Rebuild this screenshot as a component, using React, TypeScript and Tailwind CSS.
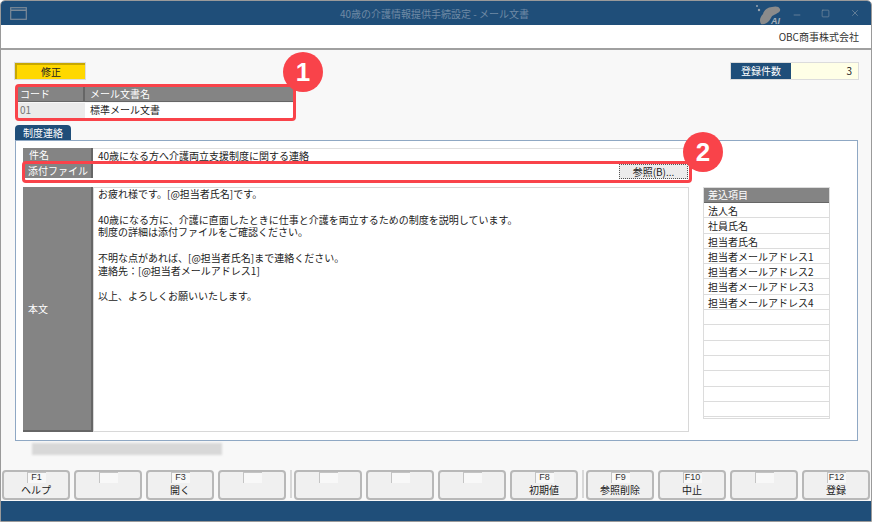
import React from 'react';
import { Minus, Square, X } from 'lucide-react';

const font = { fontFamily: '"Noto Sans CJK JP", "Liberation Sans", sans-serif' };

const fieldItems = [
  '法人名',
  '社員氏名',
  '担当者氏名',
  '担当者メールアドレス1',
  '担当者メールアドレス2',
  '担当者メールアドレス3',
  '担当者メールアドレス4',
  '',
  '',
  '',
  '',
  '',
  '',
  '',
];

const bodyLines = [
  'お疲れ様です。[@担当者氏名]です。',
  '',
  '40歳になる方に、介護に直面したときに仕事と介護を両立するための制度を説明しています。',
  '制度の詳細は添付ファイルをご確認ください。',
  '',
  '不明な点があれば、[@担当者氏名]まで連絡ください。',
  '連絡先：[@担当者メールアドレス1]',
  '',
  '以上、よろしくお願いいたします。',
];

const FnKey = ({ k, label }: { k?: string; label?: string }) => (
  <div className="w-[68px] h-[30px] shrink-0 rounded-[4px] border-2 border-[#b8b8b8] bg-[#f0f0f0] flex flex-col items-center">
    <div className="h-[11px] min-w-[19px] px-[1px] border-t border-l border-[#c4c4c4] bg-[#f8f8f8] font-['Liberation_Sans'] text-[9px] leading-[9px] text-[#333] text-center">
      {k}
    </div>
    <div className="text-[10px] leading-[14px] text-[#222] whitespace-nowrap">{label}</div>
  </div>
);

const Badge = ({ n, className }: { n: string; className: string }) => (
  <div className={`absolute w-[40px] h-[40px] rounded-full bg-[#f9434a] text-white text-[26px] font-bold leading-[40px] text-center ${className}`} style={{ fontFamily: '"Liberation Sans", sans-serif' }}>
    {n}
  </div>
);

export default function App() {
  return (
    <div className="relative w-[872px] h-[522px] overflow-hidden bg-[#f8f8f8] text-[10px] text-[#222] flex flex-col border border-[#9a9a9a] rounded-t-[5px]" style={font}>
      {/* title bar */}
      <div className="h-[24px] shrink-0 bg-[#1f4e79] flex items-center pl-[9px] pr-[9px]">
        <svg width="17" height="13" viewBox="0 0 17 13" fill="none" stroke="#7c8a98" strokeWidth="1.2">
          <rect x="0.7" y="0.7" width="15.6" height="11.6" />
          <path d="M1 3.2h15" strokeWidth="1.6" />
        </svg>
        <div className="flex-1 text-center text-[10px] text-[#6f8aa5] pl-[88px]">40歳の介護情報提供手続設定 - メール文書</div>
        <svg width="28" height="24" viewBox="0 0 28 24" className="mr-[10px]">
          <path d="M7 23C5 20 6 16 9 13 10 9 14 6 18 6c3-1 7-1 8 2 1 3-3 4-6 6-3 1-3 4-5 6-2 2-5 4-8 3z" fill="#8b8b8b" />
          <circle cx="3" cy="5" r="1" fill="#9aa5b0" />
          <circle cx="5" cy="9" r="1.2" fill="#9aa5b0" />
          <text x="17" y="23" fontSize="9" fontWeight="700" fontStyle="italic" fill="#a4aeb8" fontFamily="Liberation Sans, sans-serif">AI</text>
        </svg>
        <Minus size={10} className="text-[#8a9aaa] mr-[19px] mt-[3px]" strokeWidth={1.5} />
        <Square size={9} className="text-[#8a9aaa] mr-[20px]" strokeWidth={1.5} />
        <X size={10} className="text-[#8a9aaa] mr-[2px]" strokeWidth={1.5} />
      </div>

      {/* company bar */}
      <div className="h-[25px] shrink-0 bg-white border-b-2 border-[#a0a0a0] flex items-center justify-end pr-[12px] text-[10px] text-[#333]">
        OBC商事株式会社
      </div>

      {/* content */}
      <div className="flex-1 flex flex-col pl-[14px] pr-[13px] pt-[13px]">
        <div className="flex justify-between w-[843px] h-[16px]">
          <div className="w-[70px] border-t-[2px] border-l-[2px] border-[#c8a800] outline outline-1 outline-[#dcdcdc] bg-[#ffd800] text-center text-[10px] leading-[13px]">修正</div>
          <div className="flex outline outline-1 outline-[#dcdcdc]">
            <div className="w-[60px] bg-[#1f4e79] text-white text-center leading-[16px]">登録件数</div>
            <div className="w-[67px] bg-[#ffffe6] text-right pr-[6px] leading-[16px]">3</div>
          </div>
        </div>

        <div className="w-[276px] ml-[2px] mt-[8px] text-[10px]">
          <div className="flex h-[15px] bg-[#848484] text-white leading-[14px] border-b border-[#666]">
            <div className="w-[68px] pl-[3px] border-r-2 border-[#666]">コード</div>
            <div className="flex-1 pl-[5px]">メール文書名</div>
          </div>
          <div className="flex h-[15px] leading-[14px] mt-[1px]">
            <div className="w-[68px] pl-[3px] bg-[#ebebeb] text-[#777]">01</div>
            <div className="flex-1 pl-[5px] bg-white">標準メール文書</div>
          </div>
        </div>

        {/* tab */}
        <div className="mt-[7px] h-[15px] w-[56px] rounded-t-[4px] bg-[#1f4e79] text-white text-center leading-[16px]">制度連絡</div>
        <div className="w-[843px] h-[301px] bg-white border border-[#8fa8c4] pl-[7px] pt-[7px] flex flex-col">
          <div className="flex h-[14px] w-[666px]">
            <div className="w-[70px] bg-[#848484] text-white pl-[6px] leading-[13px] border-r-2 border-[#666]">件名</div>
            <div className="flex-1 pl-[5px] leading-[13px] text-[10px] border-t border-[#e0e0e0] border-r">40歳になる方へ介護両立支援制度に関する連絡</div>
          </div>
          <div className="flex h-[15px] w-[666px] mt-[1px]">
            <div className="w-[70px] bg-[#848484] text-white pl-[5px] leading-[16px] border-r-2 border-[#666]">添付ファイル</div>
            <div className="flex-1 flex justify-end pr-[1px] pt-[1px]">
              <div className="w-[69px] h-[15px] bg-[#ececec] border border-dotted border-[#555] text-center leading-[14px] text-[10px]">参照(B)...</div>
            </div>
          </div>

          <div className="flex mt-[9px]">
            <div className="flex w-[666px] h-[245px]">
              <div className="w-[70px] bg-[#848484] text-white pl-[5px] flex items-center border-r-2 border-b-2 border-[#666]">本文</div>
              <div className="flex-1 border border-[#d8d8d8] pl-[4px] text-[10px] leading-[12.75px]">
                {bodyLines.map((line, i) => (
                  <div key={i} className="h-[12.75px] whitespace-nowrap">{line}</div>
                ))}
              </div>
            </div>
            <div className="ml-[14px] w-[127px] h-[232px] border border-[#dcdcdc] flex flex-col">
              <div className="h-[15px] shrink-0 bg-[#848484] border-b border-[#666] text-white pl-[4px] leading-[14px]">差込項目</div>
              {fieldItems.map((item, i) => (
                <div key={i} className="h-[15.3px] shrink-0 border-b border-[#dcdcdc] pl-[4px] leading-[15px] text-[10px] whitespace-nowrap">{item}</div>
              ))}
            </div>
          </div>
        </div>

        {/* blurred path */}
        <div className="ml-[17px] mt-[2px] w-[190px] h-[12px] bg-[#d8d8d8] blur-[1px]" />
      </div>

      {/* function keys */}
      <div className="h-[31px] shrink-0 flex pl-[1px] gap-[4px] items-start">
        <FnKey k="F1" label="ヘルプ" />
        <FnKey />
        <FnKey k="F3" label="開く" />
        <FnKey />
        <div className="w-[2px] h-[28px] -mr-[2px] bg-[#d8d8d8]" />
        <FnKey />
        <FnKey />
        <FnKey />
        <FnKey k="F8" label="初期値" />
        <div className="w-[2px] h-[28px] -mr-[2px] bg-[#d8d8d8]" />
        <FnKey k="F9" label="参照削除" />
        <FnKey k="F10" label="中止" />
        <FnKey />
        <FnKey k="F12" label="登録" />
      </div>

      {/* status bar */}
      <div className="h-[20px] shrink-0 bg-[#1f4e79]" />

      {/* red annotations */}
      <div className="absolute left-[14px] top-[83px] w-[281px] h-[37px] rounded-[4px] border-[3px] border-[#f9434a]" />
      <div className="absolute left-[21px] top-[160px] w-[670px] h-[22px] rounded-[4px] border-[3px] border-[#f9434a]" />
      <Badge n="1" className="left-[282px] top-[51px]" />
      <Badge n="2" className="left-[682px] top-[131px]" />
    </div>
  );
}
